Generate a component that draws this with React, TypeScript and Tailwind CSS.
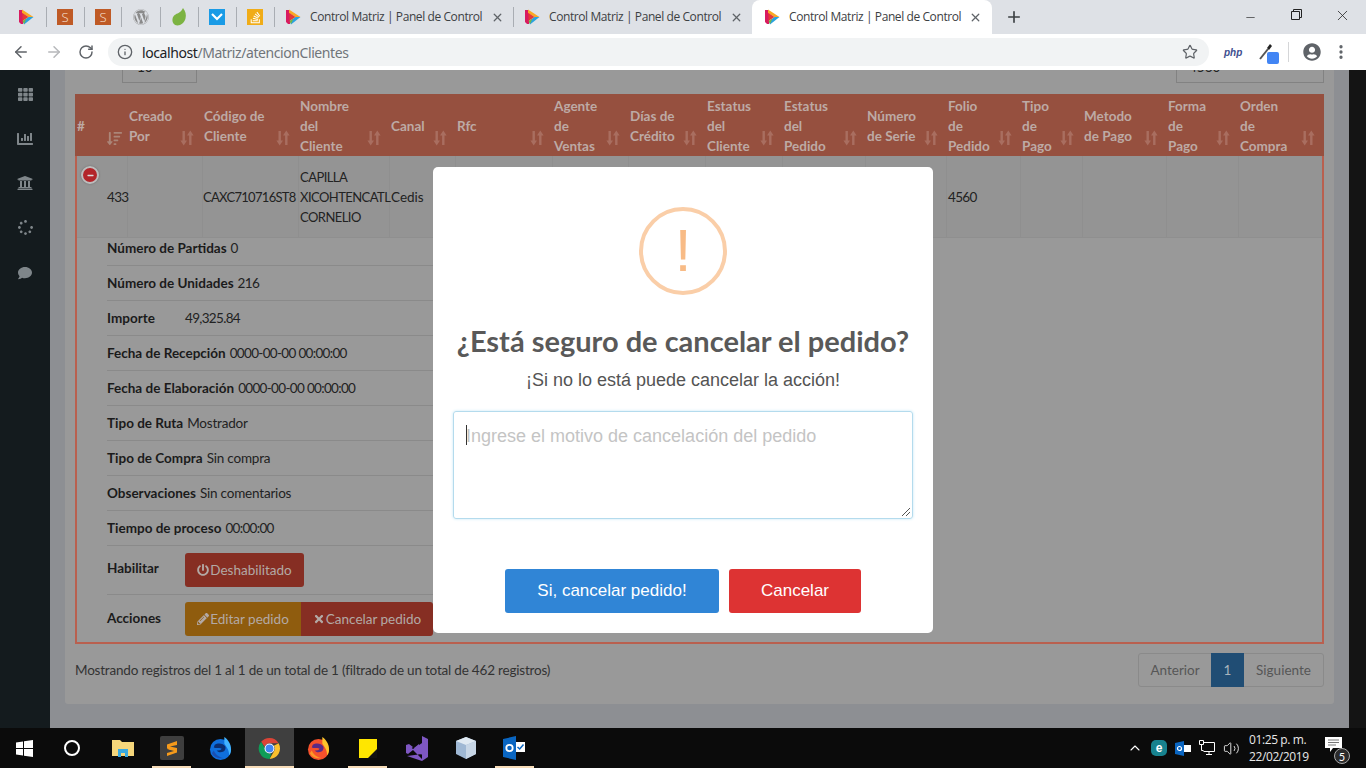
import { ArrowLeft, ArrowRight, RotateCw, Info, Star, Plus, X, Minus, EllipsisVertical, ChevronUp, Volume2 } from "lucide-react";
import {
  FaPowerOff,
  FaPencilAlt,
  FaTimes,
  FaUniversity,
  FaComment,
  FaChartBar,
  FaSpinner,
  FaTh,
  FaWordpress,
  FaStackOverflow,
  FaUserCircle,
  FaSortAmountDown,
  FaMinus,
} from "react-icons/fa";

const pageFont = "font-['Lato',sans-serif]";

const columns = [
  { label: ["#"] },
  { label: ["Creado", "Por"] },
  { label: ["Código de", "Cliente"] },
  { label: ["Nombre", "del", "Cliente"] },
  { label: ["Canal"] },
  { label: ["Rfc"] },
  { label: ["Agente", "de", "Ventas"] },
  { label: ["Días de", "Crédito"] },
  { label: ["Estatus", "del", "Cliente"] },
  { label: ["Estatus", "del", "Pedido"] },
  { label: ["Número", "de Serie"] },
  { label: ["Folio", "de", "Pedido"] },
  { label: ["Tipo", "de", "Pago"] },
  { label: ["Metodo", "de Pago"] },
  { label: ["Forma", "de", "Pago"] },
  { label: ["Orden", "de", "Compra"] },
];

// numeric values get tighter tracking, Lato's digits run wide
const details = [
  { k: "Número de Partidas", v: "0", num: true },
  { k: "Número de Unidades", v: "216", num: true },
  { k: "Importe", v: "49,325.84", num: true },
  { k: "Fecha de Recepción", v: "0000-00-00 00:00:00", num: true },
  { k: "Fecha de Elaboración", v: "0000-00-00 00:00:00", num: true },
  { k: "Tipo de Ruta", v: "Mostrador" },
  { k: "Tipo de Compra", v: "Sin compra" },
  { k: "Observaciones", v: "Sin comentarios" },
  { k: "Tiempo de proceso", v: "00:00:00", num: true },
];

function PlayLogo() {
  return (
    <svg width="16" height="16" viewBox="0 0 16 16" className="shrink-0">
      <path d="M1 1 L5 1 L5 15 L3 15 L1 13 Z" fill="#d81b60" />
      <path d="M4 .5 L15.5 8 L10.5 8 L4 4 Z" fill="#f9a825" />
      <path d="M15.5 8 L6 15.5 L5 12 L10.5 8 Z" fill="#29a3e0" />
      <path d="M4.5 4 L10.5 8 L4.5 12 Z" fill="#e53935" />
      <path d="M4.5 12 L8.5 9.5 L6 15 Z" fill="#7cb342" />
    </svg>
  );
}

function Sep() {
  return <div className="h-[20px] w-px shrink-0 bg-[#a9adb3]" />;
}

function Tab({ active }: { active?: boolean }) {
  return (
    <div
      className={`flex h-[34px] shrink-0 items-center ${
        active ? "w-[240px] rounded-t-[8px] bg-white pl-[12px] pr-[10px]" : "w-[238px] pl-[10px] pr-[9px]"
      }`}
    >
      <PlayLogo />
      <span className="ml-[9px] flex-1 whitespace-nowrap font-['Open_Sans',sans-serif] text-[12px] tracking-[-0.41px] text-[#3c4043]">
        Control Matriz | Panel de Control
      </span>
      <X size={13} strokeWidth={2.4} className="text-[#5f6368]" />
    </div>
  );
}

function SortIcon({ active }: { active?: boolean }) {
  if (active) {
    return <FaSortAmountDown size={15} className="text-[#ab8578]" />;
  }
  return (
    <svg width="14" height="16" viewBox="0 0 14 16" className="text-[#a96e60]" fill="currentColor">
      <path d="M2.5 1h2.4v9.5h2.1L3.7 15.5.4 10.5h2.1z" />
      <path d="M9.1 15h2.4V5.5h2.1L10.3.5 7 5.5h2.1z" />
    </svg>
  );
}

function ChromeIcon() {
  return (
    <svg width="23" height="23" viewBox="0 0 24 24">
      <path d="M12 1a11 11 0 0 1 9.5 5.5H12a5.5 5.5 0 0 0-5.2 3.7L3.3 5A11 11 0 0 1 12 1z" fill="#db4437" />
      <path d="M21.5 6.5A11 11 0 0 1 12 23l4.8-8.2A5.5 5.5 0 0 0 16.6 9z" fill="#fbc02d" />
      <path d="M3.3 5l4.8 8.2A5.5 5.5 0 0 0 14 17.2L12 23A11 11 0 0 1 3.3 5z" fill="#0f9d58" />
      <circle cx="12" cy="12" r="5.2" fill="#fff" />
      <circle cx="12" cy="12" r="4.1" fill="#4285f4" />
    </svg>
  );
}

function FoxIcon({ dev }: { dev?: boolean }) {
  return (
    <svg width="23" height="25" viewBox="0 0 24 26">
      <circle cx="12" cy="14" r="11" fill={dev ? "#0f6fdc" : "#f5512c"} />
      <path d="M16 1c4 3 7 7 7 13 0 3-1 5-2 6 0-6-3-9-5-12z" fill={dev ? "#41b3ff" : "#fdc32c"} />
      <path d="M6 9c3-2 9-2 11 2 1 3-1 6-5 6-2 0-3-1-4-2 2 0 5 0 5-2-3-1-6 0-8-1z" fill={dev ? "#0b2e6f" : "#5b2a86"} />
      <path d="M3 18c2 4 7 6 12 5-4-1-8-3-10-8z" fill={dev ? "#1b4fb0" : "#fd9827"} />
    </svg>
  );
}

function TaskIcon({ children, active, open }: { children: React.ReactNode; active?: boolean; open?: boolean }) {
  return (
    <div className={`relative flex h-[40px] w-[49px] shrink-0 items-center justify-center ${active ? "bg-[#3f3f3f]" : ""}`}>
      {children}
      {open && <div className={`absolute bottom-0 h-[2px] bg-[#f7dcb8] ${active ? "inset-x-0" : "inset-x-[5px]"}`} />}
    </div>
  );
}

export default function App() {
  return (
    <div className={`relative flex h-[768px] w-[1366px] flex-col overflow-hidden bg-black ${pageFont}`}>
      {/* browser tabs */}
      <div className="flex h-[34px] shrink-0 items-center bg-[#dee1e6] pl-[18px]">
        <PlayLogo />
        <div className="ml-[12px] mr-[10px]"><Sep /></div>
        <div className="flex h-[16px] w-[16px] shrink-0 items-center justify-center bg-[#bf5a25] font-['Open_Sans',sans-serif] text-[13px] font-light leading-none text-[#f8e4d8]">S</div>
        <div className="ml-[11px] mr-[10px]"><Sep /></div>
        <div className="flex h-[16px] w-[16px] shrink-0 items-center justify-center bg-[#bf5a25] font-['Open_Sans',sans-serif] text-[13px] font-light leading-none text-[#f8e4d8]">S</div>
        <div className="ml-[10px] mr-[11px]"><Sep /></div>
        <FaWordpress size={16} className="shrink-0 text-[#8a8a8a]" />
        <div className="ml-[11px] mr-[10px]"><Sep /></div>
        <svg width="16" height="18" viewBox="0 0 16 18" className="shrink-0">
          <path d="M12 0c2.500 3 3.500 7 2.500 10.500-1 4-4.500 7-8 7-3.500 0-5.500-3-5-6.500 .5-3.500 3.500-5 6-6 2-1 3.500-3 4.500-5z" fill="#7cb342" />
        </svg>
        <div className="ml-[11px] mr-[10px]"><Sep /></div>
        <div className="flex h-[16px] w-[16px] shrink-0 items-center justify-center bg-[#1a9be6]">
          <svg width="12" height="8" viewBox="0 0 12 8"><path d="M1 1l5 5 5-5" stroke="#fff" strokeWidth="2.200" fill="none" /></svg>
        </div>
        <div className="ml-[11px] mr-[10px]"><Sep /></div>
        <div className="flex h-[16px] w-[16px] shrink-0 items-center justify-center bg-[#f0ac18]">
          <FaStackOverflow size={13} className="text-white" />
        </div>
        <div className="ml-[11px]"><Sep /></div>
        <Tab />
        <Sep />
        <Tab />
        <Tab active />
        <Plus size={18} strokeWidth={2.2} className="ml-[13px] text-[#3c4043]" />
        <div className="ml-auto flex items-center text-[#222]">
          <Minus size={13} strokeWidth={1.2} className="mr-[34px]" />
          <svg width="11" height="11" viewBox="0 0 11 11" className="mr-[32px] -mt-[6px]" fill="none" stroke="currentColor">
            <path d="M.5 2.500h8v8h-8zM2.500 2.500v-2h8v8h-2" />
          </svg>
          <X size={17} strokeWidth={1.1} className="mr-[15px] -mt-[4px]" />
        </div>
      </div>

      {/* toolbar */}
      <div className="flex h-[36px] shrink-0 items-center bg-white">
        <ArrowLeft size={18} strokeWidth={2} className="ml-[12px] text-[#5f6368]" />
        <ArrowRight size={18} strokeWidth={2} className="ml-[15px] text-[#b6b8bb]" />
        <RotateCw size={16} strokeWidth={2.2} className="ml-[15px] text-[#5f6368]" />
        <div className="ml-[14px] flex h-[28px] w-[1101px] items-center rounded-full bg-[#f1f3f4] pl-[9px] pr-[11px]">
          <Info size={16} strokeWidth={2} className="text-[#5f6368]" />
          <span className="ml-[9px] flex-1 font-['Noto_Sans',sans-serif] text-[14px] tracking-[-0.42px] text-[#70757a]">
            <span className="text-[#202124]">localhost</span>/Matriz/atencionClientes
          </span>
          <Star size={16} strokeWidth={1.8} className="text-[#5f6368]" />
        </div>
        <span className="ml-[15px] font-['Liberation_Sans',sans-serif] text-[10px] font-bold italic text-[#3f4f8f]">php</span>
        <div className="relative ml-[17px] h-[20px] w-[20px]">
          <svg width="16" height="18" viewBox="0 0 16 18">
            <path d="M1 17L9 7" stroke="#555" strokeWidth="2" />
            <path d="M8 6l3-4 2 2-3 4z" fill="#222" />
          </svg>
          <div className="absolute bottom-[-2px] right-0 h-[12px] w-[12px] rounded-[2px] bg-[#4285f4]" />
        </div>
        <div className="ml-[9px] h-[20px] w-px bg-[#d5d6d8]" />
        <FaUserCircle size={18} className="ml-[14px] text-[#5f6368]" />
        <EllipsisVertical size={18} strokeWidth={2.4} className="ml-[11px] text-[#5f6368]" />
      </div>

      {/* page */}
      <div className="flex min-h-0 flex-1">
        <aside className="flex w-[50px] shrink-0 flex-col items-center bg-[#141b1e] pt-[17px] text-[#7f868a]">
          <FaTh size={15} />
          <FaChartBar size={16} className="mt-[29px]" />
          <FaUniversity size={16} className="mt-[28px]" />
          <FaSpinner size={15} className="mt-[29px]" />
          <FaComment size={14} className="mt-[31px]" />
        </aside>

        <main className="min-w-0 flex-1 overflow-hidden bg-[#8d8f93] pb-[24px] pl-[15px] pr-[15px]">
          <div className="flex h-[634px] flex-col rounded-b-[3px] bg-[#999999] pl-[10px] pr-[10px] text-[#222]">
            {/* datatable controls, scrolled off the top */}
            <div className="flex h-[24px] shrink-0 items-start overflow-hidden text-[13.5px]">
              <div className="-mt-[21px] ml-[47px] flex h-[34px] w-[75px] items-center border border-[#828282] pl-[14px] pt-[2px]">10</div>
              <span className="-mt-[17px] ml-[6px]">registros</span>
              <div className="-mt-[21px] ml-auto flex h-[34px] w-[148px] items-center border border-[#828282] pl-[12px] pt-[2px]">4560</div>
            </div>

            {/* table */}
            <div className="flex h-[550px] shrink-0 flex-col border-x-2 border-b-2 border-[#b9604f]">
              <div className="-mx-[2px] grid h-[62px] shrink-0 grid-cols-[53px_75px_96px_91px_66px_97px_76px_77px_77px_83px_81px_74px_62px_84px_72px_85px] bg-[#96503f] text-[13.5px] font-bold leading-[20px] text-[#bdaaa5]">
                {columns.map((col, i) => (
                  <div key={i} className="relative flex h-[62px] flex-col justify-center pl-[1px] pt-[2px]">
                    <div className={i === 0 ? "pl-[1px]" : ""}>
                      {col.label.map((line) => (
                        <div key={line}>{line}</div>
                      ))}
                    </div>
                    <div className={`absolute bottom-[10px] ${i === 0 ? "right-[6px]" : "right-[9px]"}`}>
                      <SortIcon active={i === 0} />
                    </div>
                  </div>
                ))}
              </div>

              <div className="grid h-[82px] shrink-0 grid-cols-[51px_75px_96px_91px_66px_97px_76px_77px_77px_83px_81px_74px_62px_84px_72px_81px] border-b border-[#8f8f8f] bg-[#949494] text-[13.5px] leading-[20px]">
                <div className="relative flex items-center border-r border-[#8f8f8f] pl-[30px] tracking-[-0.67px]">
                  433
                  <div className="absolute left-[4px] top-[10px] flex h-[18px] w-[18px] items-center justify-center rounded-full border-2 border-[#bdbdbd] bg-[#b3252a] shadow-[0_0_2px_#666]">
                    <FaMinus size={7} className="text-[#ddd]" />
                  </div>
                </div>
                <div className="border-r border-[#8f8f8f]" />
                <div className="flex items-center whitespace-nowrap border-r border-[#8f8f8f] text-[13px] tracking-[-0.7px]">CAXC710716ST8</div>
                <div className="flex items-center whitespace-nowrap border-r border-[#8f8f8f] pl-[1px] text-[13px] tracking-[-0.55px]">
                  <div>
                    <div>CAPILLA</div>
                    <div>XICOHTENCATL</div>
                    <div>CORNELIO</div>
                  </div>
                </div>
                <div className="flex items-center border-r border-[#8f8f8f] pl-[1px]">Cedis</div>
                <div className="border-r border-[#8f8f8f]" />
                <div className="border-r border-[#8f8f8f]" />
                <div className="border-r border-[#8f8f8f]" />
                <div className="border-r border-[#8f8f8f]" />
                <div className="border-r border-[#8f8f8f]" />
                <div className="border-r border-[#8f8f8f]" />
                <div className="flex items-center border-r border-[#8f8f8f] pl-[1px] tracking-[-0.67px]">4560</div>
                <div className="border-r border-[#8f8f8f]" />
                <div className="border-r border-[#8f8f8f]" />
                <div className="border-r border-[#8f8f8f]" />
                <div />
              </div>

              {/* expanded row */}
              <div className="w-[370px] pl-[30px] text-[13.5px] leading-[20px]">
                {details.map((d, i) => (
                  <div
                    key={d.k}
                    className={`flex items-end whitespace-nowrap border-b border-[#8a8a8a] pb-[7px] ${i === 0 ? "h-[28px]" : "h-[35px]"}`}
                  >
                    <b className={`shrink-0 font-bold text-[#1b1b1b] ${d.k === "Importe" ? "w-[78px]" : "mr-[4px]"}`}>{d.k}</b>
                    <span className={d.num ? "tracking-[-0.67px]" : "tracking-[-0.2px]"}>{d.v}</span>
                  </div>
                ))}
                <div className="flex h-[49px] items-start border-b border-[#8a8a8a] pt-[7px]">
                  <b className="w-[78px] shrink-0 pt-[5px] font-bold text-[#1b1b1b]">Habilitar</b>
                  <div className="flex h-[34px] w-[119px] shrink-0 items-center justify-center gap-px rounded-[3px] bg-[#862e23] text-[#b3a9a5]">
                    <FaPowerOff size={12} />Deshabilitado
                  </div>
                </div>
                <div className="flex items-start pt-[7px]">
                  <b className="w-[78px] shrink-0 pt-[6px] font-bold text-[#1b1b1b]">Acciones</b>
                  <div className="flex h-[34px] w-[116px] shrink-0 items-center justify-center gap-px rounded-l-[3px] bg-[#8f5c0e] text-[#b3a9a5]">
                    <FaPencilAlt size={12} />Editar pedido
                  </div>
                  <div className="flex h-[34px] w-[132px] shrink-0 items-center justify-center gap-px rounded-r-[3px] bg-[#862e23] text-[#b3a9a5]">
                    <FaTimes size={12} />Cancelar pedido
                  </div>
                </div>
              </div>
            </div>

            {/* footer */}
            <div className="mt-[9px] flex items-start justify-between text-[13.5px]">
              <span className="mt-[7px] tracking-[-0.2px] text-[#333]">Mostrando registros del 1 al 1 de un total de 1 (filtrado de un total de 462 registros)</span>
              <div className="flex h-[34px] items-center rounded-[3px] border border-[#8a8a8a] text-[#565656]">
                <span className="flex h-[32px] w-[72px] items-center justify-center">Anterior</span>
                <span className="flex h-[34px] w-[33px] items-center justify-center bg-[#204d74] text-[#a9b4bd]">1</span>
                <span className="flex h-[32px] w-[79px] items-center justify-center">Siguiente</span>
              </div>
            </div>
          </div>
        </main>

        <div className="w-[17px] shrink-0 bg-[#141414]" />
      </div>

      {/* taskbar */}
      <div className="flex h-[40px] shrink-0 items-center bg-[#0b0b0b] text-white">
        <div className="flex w-[49px] justify-center">
          <svg width="17" height="17" viewBox="0 0 17 17" fill="#fff">
            <path d="M0 2.500l7-1v6.500H0zM8 1.300L17 0v8H8zM0 9h7v6.500l-7-1zM8 9h9v8l-9-1.300z" />
          </svg>
        </div>
        <TaskIcon>
          <div className="mr-[3px] h-[16px] w-[16px] rounded-full border-[2.5px] border-white" />
        </TaskIcon>
        <TaskIcon>
          <svg width="22" height="20" viewBox="0 0 22 20">
            <path d="M0 2h8l2 2h12v14H0z" fill="#f5d67b" />
            <path d="M6 11h10v8h-3v-4H9v4H6z" fill="#39a9e0" />
          </svg>
        </TaskIcon>
        <TaskIcon open>
          <div className="flex h-[24px] w-[24px] items-center justify-center rounded-[2px] bg-[#3e3e3e]">
            <svg width="12" height="17" viewBox="0 0 12 17">
              <path d="M11 1L1 4.500v4L11 12V8L4 6.500 11 5zM1 9l7 2-7 2v3l10-3.500V9.500" fill="#f59a1b" />
            </svg>
          </div>
        </TaskIcon>
        <TaskIcon>
          <FoxIcon dev />
        </TaskIcon>
        <TaskIcon active open>
          <ChromeIcon />
        </TaskIcon>
        <TaskIcon>
          <FoxIcon />
        </TaskIcon>
        <TaskIcon open>
          <svg width="18" height="19" viewBox="0 0 18 19">
            <rect width="18" height="19" fill="#ffe600" />
            <path d="M9 19L18 10V19Z" fill="#111" />
          </svg>
        </TaskIcon>
        <TaskIcon>
          <svg width="24" height="25" viewBox="0 0 24 25">
            <path d="M17 0l6 3v18l-6 4L2 20l15-2V7L8 13 3 9 1 10v7l2 1 5-4 9 9z" fill="#7e57c2" />
            <path d="M1 9l3-1 4 3-4 3-3-1zm8 3l5-4v9z" fill="#7e57c2" />
          </svg>
        </TaskIcon>
        <TaskIcon>
          <svg width="22" height="24" viewBox="0 0 22 24">
            <path d="M11 1l10 4v13l-10 5-10-5V5z" fill="#9fb8d4" />
            <path d="M11 1l10 4-10 4L1 5z" fill="#dfe9f2" />
            <path d="M11 9l10-4v13l-10 5z" fill="#c7d6e6" />
          </svg>
        </TaskIcon>
        <TaskIcon open>
          <svg width="24" height="24" viewBox="0 0 24 24">
            <path d="M0 3l13-3v24L0 21z" fill="#0a66c2" />
            <circle cx="6.500" cy="12" r="3.200" fill="none" stroke="#fff" strokeWidth="1.800" />
            <rect x="13" y="6" width="9" height="10" fill="#fff" />
            <path d="M14.500 11l2.200 2 3.800-4.500" stroke="#0a66c2" strokeWidth="1.500" fill="none" />
          </svg>
        </TaskIcon>

        <div className="ml-auto flex items-center">
          <ChevronUp size={16} strokeWidth={1.6} className="mr-[8px]" />
          <div className="mr-[8px] flex h-[16px] w-[16px] items-center justify-center rounded-[5px] bg-[#17828e] font-['Liberation_Sans',sans-serif] text-[12px] font-bold leading-none">e</div>
          <svg width="16" height="15" viewBox="0 0 16 15" className="mr-[8px]">
            <path d="M0 2l9-2v15l-9-2z" fill="#0a66c2" />
            <circle cx="4.500" cy="7.500" r="2" fill="none" stroke="#fff" strokeWidth="1.200" />
            <rect x="9" y="4" width="7" height="7" fill="#fff" />
          </svg>
          <svg width="16" height="16" viewBox="0 0 16 16" fill="none" stroke="#fff" className="mr-[8px]">
            <path d="M4.500 2.500H15.500V11.500H4.500M7 14.500h6M10 11.500v3M.5.500h4v4h-4zM2.500 4.500v6h2" />
          </svg>
          <Volume2 size={17} strokeWidth={1.2} className="mr-[9px]" />
          <div className="w-[58px] whitespace-nowrap font-['Open_Sans',sans-serif] text-[12px] leading-[17px] tracking-[-0.4px] text-[#e8e8e8]">
            <div>01:25 p. m.</div>
            <div>22/02/2019</div>
          </div>
          <div className="relative ml-[18px] mr-[24px] h-[24px] w-[17px]">
            <svg width="17" height="15" viewBox="0 0 17 15" className="mt-[1px]">
              <path d="M0 0h17v11H8l-3 4v-4H0z" fill="#fff" />
              <path d="M3 3h11M3 5.500h11M3 8h8" stroke="#777" strokeWidth="1" />
            </svg>
            <div className="absolute bottom-[-4px] right-[-8px] flex h-[16px] w-[16px] items-center justify-center rounded-full border border-[#aaa] bg-[#2b2b2b] text-[11px] leading-none">5</div>
          </div>
        </div>
      </div>

      {/* sweetalert modal */}
      <div className="absolute left-[433px] top-[167px] flex h-[466px] w-[500px] flex-col items-center rounded-[5px] bg-white p-[20px]">
        <div className="mt-[20px] flex h-[88px] w-[88px] shrink-0 items-center justify-center rounded-full border-[4px] border-[#facea8] text-[60px] leading-none text-[#f8bb86]">
          <span className="font-['Liberation_Sans',sans-serif]">!</span>
        </div>
        <h2 className="mt-[28px] whitespace-nowrap text-[29px] font-bold leading-[36px] text-[#595959]">¿Está seguro de cancelar el pedido?</h2>
        <p className="mt-[10px] font-['Liberation_Sans',sans-serif] text-[18px] leading-[22px] text-[#545454]">¡Si no lo está puede cancelar la acción!</p>
        <div className="relative mt-[20px] h-[108px] w-[460px] shrink-0 rounded-[3px] border border-[#b4dbed] px-[12px] pt-[12px] font-['Liberation_Sans',sans-serif] text-[18px] leading-[24px] text-[#c4c4c4] shadow-[0_0_3px_#c4e6f5]">
          <span className="absolute left-[12px] top-[13px] h-[20px] w-px bg-[#333]" />
          Ingrese el motivo de cancelación del pedido
          <svg width="10" height="10" viewBox="0 0 10 10" className="absolute bottom-[1px] right-[1px]" stroke="#555">
            <path d="M1 9l8-8M5 9l4-4" />
          </svg>
        </div>
        <div className="mt-[50px] flex gap-[10px] font-['Liberation_Sans',sans-serif] text-[17px] text-white">
          <div className="flex h-[44px] w-[214px] items-center justify-center rounded-[3px] bg-[#3085d6]">Si, cancelar pedido!</div>
          <div className="flex h-[44px] w-[132px] items-center justify-center rounded-[3px] bg-[#dd3333]">Cancelar</div>
        </div>
      </div>
    </div>
  );
}
